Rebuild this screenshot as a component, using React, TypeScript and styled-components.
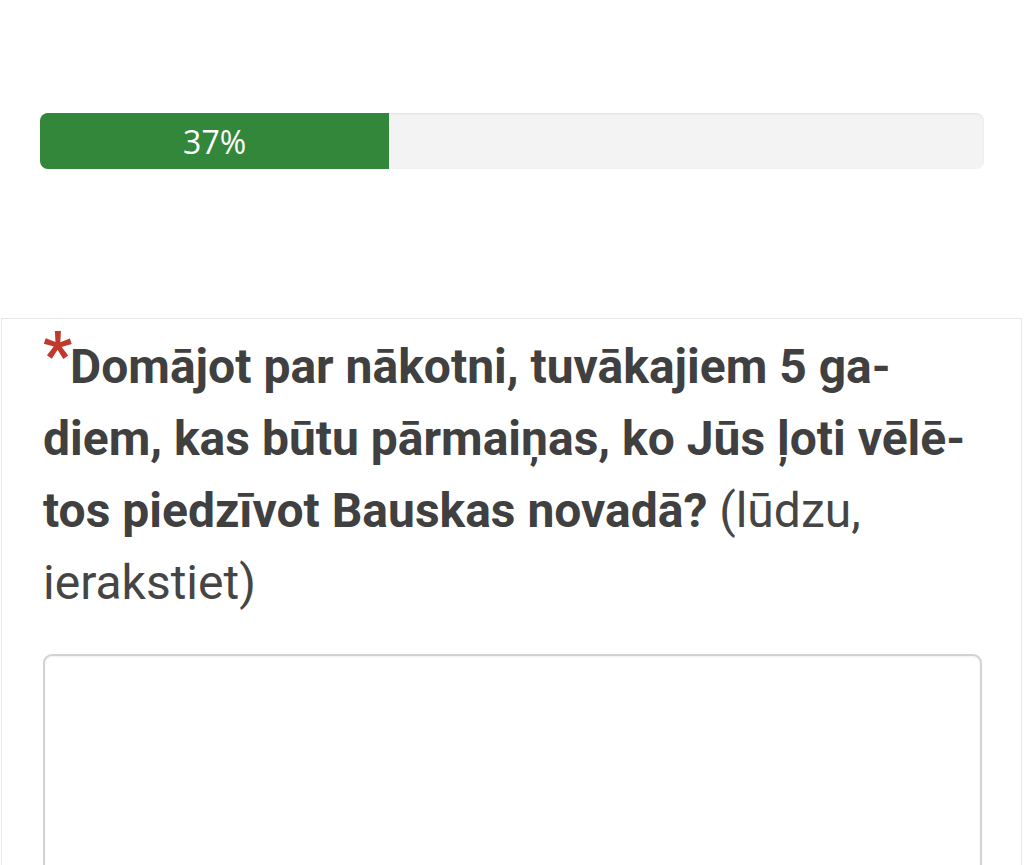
import React from "react";
import styled, { createGlobalStyle } from "styled-components";

const GlobalStyle = createGlobalStyle`
  html, body {
    margin: 0;
    padding: 0;
    background: #ffffff;
  }
  * {
    box-sizing: border-box;
  }
`;

const Page = styled.div`
  width: 1024px;
  height: 865px;
  overflow: hidden;
  background: #ffffff;
  display: flex;
  flex-direction: column;
`;

const ProgressWrap = styled.div`
  padding: 113px 40px 0 40px;
`;

const ProgressTrack = styled.div`
  height: 56px;
  border-radius: 8px;
  background: #f3f3f3;
  box-shadow: inset 0 1px 2px rgba(0, 0, 0, 0.08);
  overflow: hidden;
  display: flex;
`;

const ProgressFill = styled.div`
  height: 100%;
  background: #32873a;
  color: #ffffff;
  font-family: "Open Sans", "Liberation Sans", sans-serif;
  font-size: 32px;
  display: flex;
  align-items: center;
  justify-content: center;
`;

const Card = styled.div`
  margin: 149px 2px 0 1px;
  border: 1.5px solid #e6e6e6;
  border-bottom: none;
  background: #ffffff;
  padding: 12px 40px 0 41px;
  flex: 1;
`;

const Question = styled.div`
  font-family: Roboto, "Liberation Sans", sans-serif;
  font-size: 48px;
  line-height: 72px;
  color: #404040;
`;

const Required = styled.span`
  color: #c0392b;
  font-weight: 700;
  font-size: 64px;
  line-height: 64px;
  vertical-align: top;
  display: inline-block;
  margin-top: -7px;
  margin-right: -2px;
`;

const Strong = styled.span`
  font-weight: 700;
`;

const Hint = styled.span`
  font-weight: 400;
  color: #454545;
`;

const Answer = styled.textarea`
  display: block;
  width: 939px;
  height: 260px;
  margin-top: 35px;
  border: 2px solid #d2d2d2;
  border-radius: 9px;
  box-shadow: inset 0 1px 2px rgba(0, 0, 0, 0.06);
  background: #ffffff;
  resize: none;
  outline: none;
`;

export default function App() {
  const percent = 37;
  return (
    <Page>
      <GlobalStyle />
      <ProgressWrap>
        <ProgressTrack>
          <ProgressFill style={{ width: `${percent}%` }}>{percent}%</ProgressFill>
        </ProgressTrack>
      </ProgressWrap>
      <Card>
        <Question>
          <Required>*</Required>
          <Strong>Domājot par nākotni, tuvākajiem 5 ga-</Strong>
          <br />
          <Strong>diem, kas būtu pārmaiņas, ko Jūs ļoti vēlē-</Strong>
          <br />
          <Strong>tos piedzīvot Bauskas novadā?</Strong> <Hint>(lūdzu,</Hint>
          <br />
          <Hint>ierakstiet)</Hint>
        </Question>
        <Answer />
      </Card>
    </Page>
  );
}
